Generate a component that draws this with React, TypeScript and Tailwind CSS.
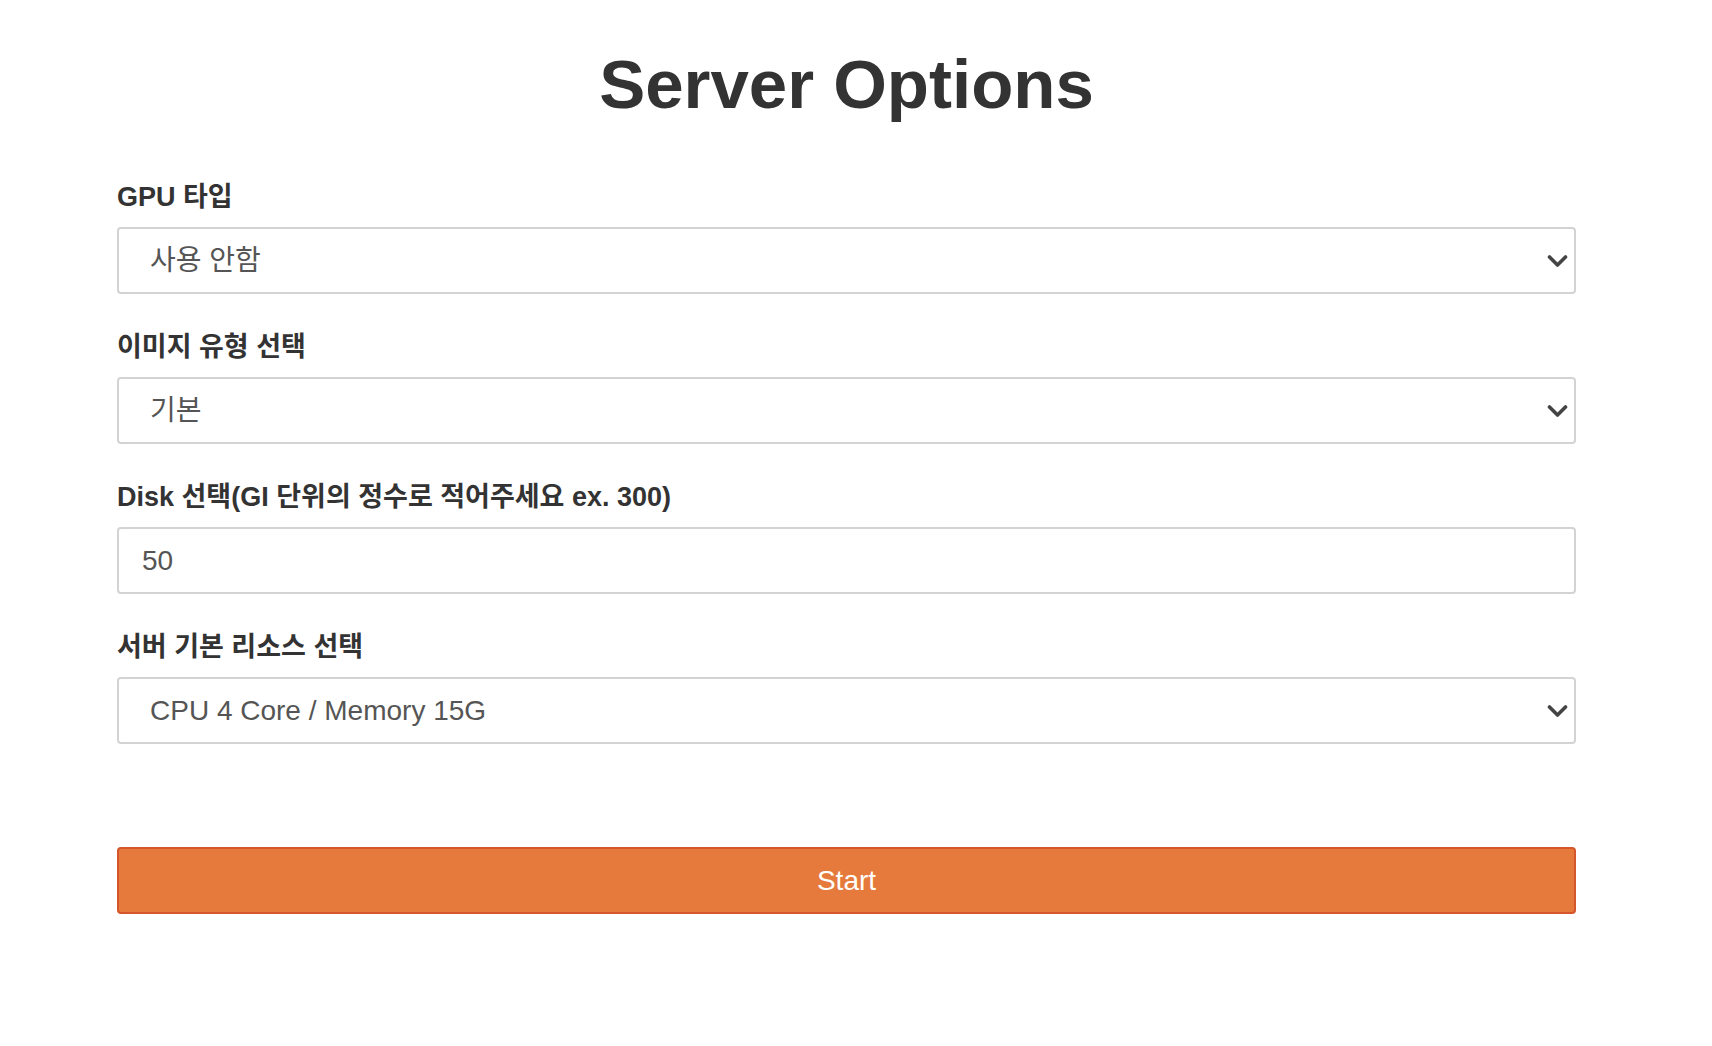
import React, { useState } from "react";

const font = { fontFamily: '"Liberation Sans", "Noto Sans CJK KR", sans-serif' };

function Chevron() {
  return (
    <svg
      className="pointer-events-none absolute right-[8px] top-1/2 -translate-y-1/2 w-[21px] h-[14px] text-[#444]"
      viewBox="0 0 21 14"
      fill="none"
      stroke="currentColor"
      strokeWidth={3.6}
      strokeLinecap="round"
      strokeLinejoin="round"
    >
      <path d="M2.5 3 10.5 11l8-8" />
    </svg>
  );
}

function SelectField({
  label,
  options,
  value,
  onChange,
}: {
  label: string;
  options: string[];
  value: string;
  onChange: (v: string) => void;
}) {
  return (
    <div className="flex flex-col">
      <label className="mt-[37px] mb-[14px] h-[32px] leading-[32px] text-[27px] font-bold text-[#333]">{label}</label>
      <div className="relative">
        <select
          value={value}
          onChange={(e) => onChange(e.target.value)}
          className="appearance-none w-full h-[67px] pl-[31px] pr-[40px] text-[28px] text-[#555] bg-white border-2 border-[#d3d3d3] rounded-[4px] outline-none"
          style={font}
        >
          {options.map((o) => (
            <option key={o}>{o}</option>
          ))}
        </select>
        <Chevron />
      </div>
    </div>
  );
}

export default function App() {
  const [gpu, setGpu] = useState("사용 안함");
  const [image, setImage] = useState("기본");
  const [disk, setDisk] = useState("50");
  const [resource, setResource] = useState("CPU 4 Core / Memory 15G");

  return (
    <div className="min-h-screen bg-white text-[#333]" style={font}>
      <div className="ml-[117px] w-[1459px] pt-[37px] pb-[120px]">
        {/* Title */}
        <h1 className="text-center text-[69px] leading-[96px] font-bold text-[#333]">Server Options</h1>

        <div className="mt-[11px]">
          <SelectField
            label="GPU 타입"
            options={["사용 안함", "T4", "A100"]}
            value={gpu}
            onChange={setGpu}
          />
          <SelectField
            label="이미지 유형 선택"
            options={["기본", "PyTorch", "TensorFlow"]}
            value={image}
            onChange={setImage}
          />

          <div className="flex flex-col">
            <label className="mt-[37px] mb-[14px] h-[32px] leading-[32px] text-[27px] font-bold text-[#333]">
              Disk 선택(GI 단위의 정수로 적어주세요 ex. 300)
            </label>
            <input
              type="text"
              value={disk}
              onChange={(e) => setDisk(e.target.value)}
              className="w-full h-[67px] px-[23px] text-[28px] text-[#555] bg-white border-2 border-[#d3d3d3] rounded-[4px] outline-none"
              style={font}
            />
          </div>

          <SelectField
            label="서버 기본 리소스 선택"
            options={["CPU 4 Core / Memory 15G", "CPU 8 Core / Memory 30G"]}
            value={resource}
            onChange={setResource}
          />
        </div>

        <button
          className="mt-[103px] w-full h-[67px] bg-[#e57a3c] border-2 border-[#d5562b] rounded-[4px] text-white text-[28px]"
          style={font}
        >
          Start
        </button>
      </div>
    </div>
  );
}
